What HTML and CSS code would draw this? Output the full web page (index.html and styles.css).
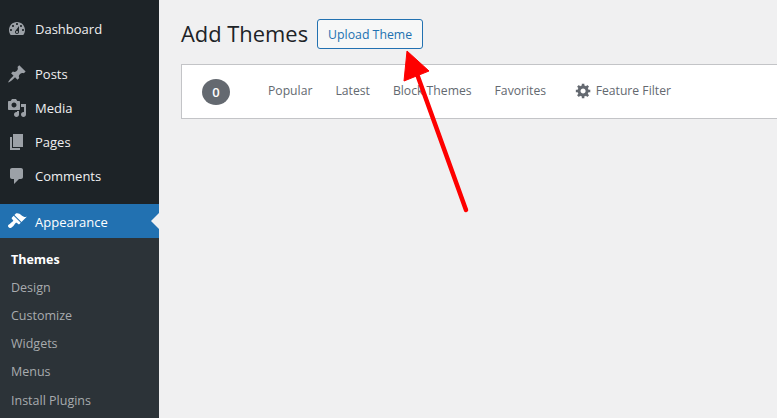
FILE: index.html
```html
<!DOCTYPE html>
<html lang="en">
<head>
    <meta charset="UTF-8">
    <meta name="viewport" content="width=device-width, initial-scale=1.0">
    <title>Add Themes</title>
    <link rel="stylesheet" href="styles.css">
</head>
<body>
    <div class="sidebar">
        <ul class="menu menu-first">
            <li><svg class="icon" viewBox="0 0 20 20"><path d="M3.76 16h12.48c1.1-1.37 1.76-3.11 1.76-5 0-4.42-3.58-8-8-8s-8 3.58-8 8c0 1.89.66 3.63 1.76 5zM10 4c.55 0 1 .45 1 1s-.45 1-1 1-1-.45-1-1 .45-1 1-1zM6 6c.55 0 1 .45 1 1s-.45 1-1 1-1-.45-1-1 .45-1 1-1zm8 0c.55 0 1 .45 1 1s-.45 1-1 1-1-.45-1-1 .45-1 1-1zm-5.37 5.55L12 7v6c0 1.1-.9 2-2 2s-2-.9-2-2c0-.57.24-1.08.63-1.45zM4 10c.55 0 1 .45 1 1s-.45 1-1 1-1-.45-1-1 .45-1 1-1zm12 0c.55 0 1 .45 1 1s-.45 1-1 1-1-.45-1-1 .45-1 1-1zm-5 3c0-.55-.45-1-1-1s-1 .45-1 1 .45 1 1 1 1-.45 1-1z"/></svg>Dashboard</li>
        </ul>
        <ul class="menu">
            <li><svg class="icon" viewBox="0 0 20 20"><path d="M10.44 3.02l1.82-1.82 6.36 6.35-1.83 1.82c-1.05-.68-2.48-.57-3.41.36l-.75.75c-.92.93-1.04 2.35-.35 3.41l-1.83 1.82-2.41-2.41-2.8 2.79c-.42.42-3.38 2.71-3.8 2.29s1.86-3.39 2.28-3.81l2.79-2.79L4.1 9.36l1.83-1.82c1.05.69 2.48.57 3.4-.36l.75-.75c.93-.92 1.05-2.35.36-3.41z"/></svg>Posts</li>
            <li><svg class="icon" viewBox="0 0 20 20"><path d="M13 11V4c0-.55-.45-1-1-1h-1.67L9 1H5L3.67 3H2c-.55 0-1 .45-1 1v7c0 .55.45 1 1 1h10c.55 0 1-.45 1-1zM7 4.5c1.38 0 2.5 1.12 2.5 2.5S8.38 9.5 7 9.5 4.5 8.38 4.5 7 5.62 4.5 7 4.5zM14 6h5v10.5c0 1.38-1.12 2.5-2.5 2.5S14 17.88 14 16.5s1.12-2.5 2.5-2.5c.17 0 .34.02.5.05V9h-3V6zm-4 8.05V13h2v3.5c0 1.38-1.12 2.5-2.5 2.5S7 17.88 7 16.5 8.12 14 9.5 14c.17 0 .34.02.5.05z"/></svg>Media</li>
            <li><svg class="icon" viewBox="0 0 20 20"><path d="M6 15V2h10v13H6zm-1 1h8v2H3V5h2v11z"/></svg>Pages</li>
            <li><svg class="icon" viewBox="0 0 20 20"><path d="M5 2h9c1.1 0 2 .9 2 2v7c0 1.1-.9 2-2 2h-2l-5 5v-5H5c-1.1 0-2-.9-2-2V4c0-1.1.9-2 2-2z"/></svg>Comments</li>
        </ul>
        <ul class="menu">
            <li class="current"><svg class="icon" viewBox="0 0 20 20"><path d="M14.48 11.06L7.41 3.99l1.5-1.5c.5-.56 2.3-.47 3.51.32 1.21.8 1.43 1.28 2.91 2.1 1.18.64 2.45 1.26 4.45.85zm-.71.71L6.7 4.7 4.93 6.47c-.39.39-.39 1.02 0 1.41l1.06 1.06c.39.39.39 1.03 0 1.42-.6.6-1.43 1.11-2.21 1.69-.35.26-.7.53-1.01.84C1.43 13.23.99 14.41 1 15c.01.6.4 1.06.65 1.35.25.3.72.64 1.35.65.59.01 1.77-.43 3.11-1.77.31-.31.58-.66.84-1.01.58-.78 1.09-1.61 1.69-2.21.39-.39 1.03-.39 1.42 0l1.06 1.06c.39.39 1.02.39 1.41 0z"/></svg><span class="current-label">Appearance</span></li>
        </ul>
        <ul class="submenu">
            <li class="active">Themes</li>
            <li>Design</li>
            <li>Customize</li>
            <li>Widgets</li>
            <li>Menus</li>
            <li>Install Plugins</li>
        </ul>
    </div>
    <div class="main">
        <div class="heading">
            <h1>Add Themes</h1>
            <a class="upload-btn" href="#upload">Upload Theme</a>
        </div>
        <div class="filter-bar">
            <span class="count">0</span>
            <a href="#popular">Popular</a>
            <a href="#latest">Latest</a>
            <a href="#block">Block Themes</a>
            <a href="#favorites">Favorites</a>
            <a class="feature" href="#filter"><svg class="gear" viewBox="0 0 20 20"><path d="M18 12h-2.18c-.17.7-.44 1.35-.81 1.93l1.54 1.54-2.1 2.1-1.54-1.54c-.58.36-1.23.63-1.91.79V19H8v-2.18c-.68-.16-1.33-.43-1.91-.79l-1.54 1.54-2.12-2.12 1.54-1.54c-.36-.58-.63-1.23-.79-1.91H1V9.03h2.17c.16-.7.44-1.35.8-1.94L2.43 5.55l2.1-2.1 1.54 1.54c.58-.37 1.24-.64 1.93-.81V2h3v2.18c.68.16 1.33.43 1.91.79l1.54-1.54 2.12 2.12-1.54 1.54c.36.59.64 1.24.8 1.94H18V12zm-8.5 1.5c1.66 0 3-1.34 3-3s-1.34-3-3-3-3 1.34-3 3 1.34 3 3 3z"/></svg>Feature Filter</a>
        </div>
    </div>
    <!-- annotation drawn over the screenshot -->
    <svg class="arrow" viewBox="0 0 777 418">
        <line x1="466" y1="210" x2="417" y2="74"/>
        <polygon points="407,51 429,71 404,81"/>
    </svg>
</body>
</html>
```

FILE: styles.css
```css
html, body {
    height: 100%;
}

body {
    margin: 0;
    display: flex;
    overflow: hidden;
    position: relative;
    background: #f0f0f1;
    font-family: "Open Sans", sans-serif;
    font-size: 13px;
}

ul {
    list-style: none;
    margin: 0;
    padding: 0;
}

a {
    text-decoration: none;
}

.sidebar {
    width: 159px;
    flex-shrink: 0;
    background: #1d2327;
    padding-top: 12px;
    display: flex;
    flex-direction: column;
}

.menu {
    margin-bottom: 11px;
}

.menu li {
    height: 34px;
    display: flex;
    align-items: center;
    padding-left: 7px;
    color: #f0f0f1;
    position: relative;
}

.menu .icon {
    width: 20px;
    height: 20px;
    margin-right: 8px;
    fill: #9ca1a7;
}

.menu:nth-child(3) {
    margin-bottom: 0;
}

.menu li.current {
    background: #2271b1;
    color: #fff;
}

.menu li.current .icon {
    fill: #fff;
}

.current-label {
    margin-top: 2px;
}

.menu li.current::after {
    content: "";
    position: absolute;
    right: 0;
    top: 9px;
    border: 8px solid transparent;
    border-left-width: 0;
    border-right-color: #f0f0f1;
}

.submenu {
    flex-grow: 1;
    background: #2c3338;
    padding: 7px 0;
}

.submenu li {
    height: 28.2px;
    display: flex;
    align-items: center;
    padding-left: 11px;
    color: #a8abae;
    font-size: 12.5px;
}

.submenu li.active {
    color: #fff;
    font-weight: 700;
}

.main {
    flex-grow: 1;
    padding: 19px 0 0 22px;
    min-width: 0;
}

.heading {
    display: flex;
    align-items: center;
    height: 30px;
}

.heading h1 {
    margin: 0 9px 1px 0;
    font-size: 21.9px;
    font-weight: 400;
    color: #1d2327;
}

.upload-btn {
    height: 28px;
    width: 104px;
    display: flex;
    align-items: center;
    justify-content: center;
    border: 1px solid #2271b1;
    border-radius: 3px;
    background: #f6f7f7;
    color: #2271b1;
    font-size: 12.3px;
}

.filter-bar {
    height: 53px;
    margin-top: 15px;
    display: flex;
    align-items: center;
    padding-left: 20px;
    background: #fff;
    border: 1px solid #c3c4c7;
    border-right: none;
}

.filter-bar a {
    color: #646970;
    font-size: 12.2px;
    margin-right: 23px;
    margin-bottom: 2px;
}

.filter-bar .count {
    width: 28px;
    height: 26px;
    margin-right: 38px;
    border-radius: 50%;
    background: #646970;
    color: #fff;
    font-weight: 600;
    display: flex;
    align-items: center;
    justify-content: center;
}

.filter-bar .feature {
    display: flex;
    align-items: center;
    margin-left: 5.5px;
}

.gear {
    width: 17px;
    height: 17px;
    margin-right: 4px;
    fill: #646970;
}

.arrow {
    position: absolute;
    left: 0;
    top: 0;
    width: 777px;
    height: 418px;
    pointer-events: none;
}

.arrow line {
    stroke: #fe0000;
    stroke-width: 4.5;
    stroke-linecap: round;
}

.arrow polygon {
    fill: #fe0000;
    stroke: #fe0000;
    stroke-width: 1;
    stroke-linejoin: round;
}
```
